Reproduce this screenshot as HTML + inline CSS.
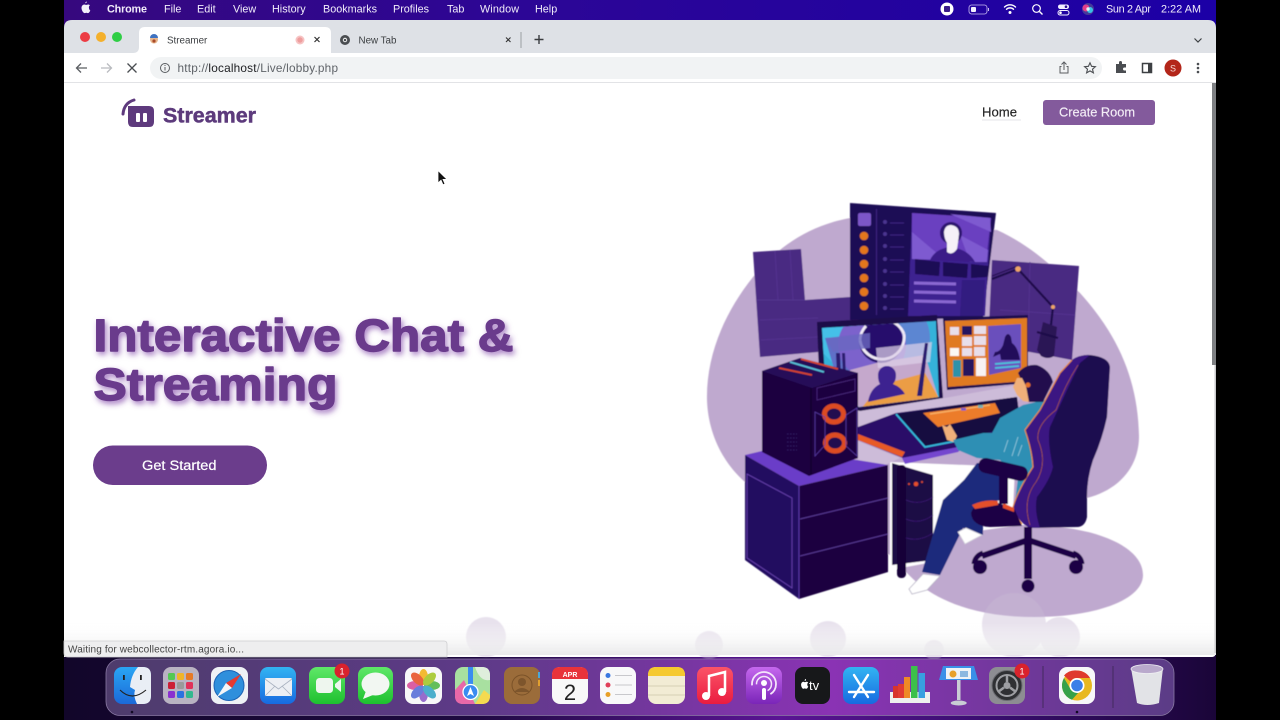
<!DOCTYPE html>
<html lang="en"><head><meta charset="utf-8"><title>Streamer</title>
<style>
html,body{margin:0;padding:0;width:1280px;height:720px;overflow:hidden;background:#000}
svg{display:block;position:absolute;left:0;top:0}
text{font-family:"Liberation Sans",sans-serif}
.m{font-size:10.8px;fill:#f1ecfa}
</style></head><body>
<svg width="1280" height="720" viewBox="0 0 1280 720" xmlns="http://www.w3.org/2000/svg">
<defs>
<linearGradient id="menu" x1="0" x2="1" y1="0" y2="0"><stop offset="0" stop-color="#36087e"/><stop offset=".4" stop-color="#2c0696"/><stop offset="1" stop-color="#1c00a6"/></linearGradient>
<linearGradient id="bot" x1="0" x2="1" y1="0" y2="0"><stop offset="0" stop-color="#12062a"/><stop offset=".35" stop-color="#1e0a40"/><stop offset=".62" stop-color="#5a1494"/><stop offset=".8" stop-color="#3a0e70"/><stop offset="1" stop-color="#1a0538"/></linearGradient>
<linearGradient id="dock" x1="0" x2="1" y1="0" y2="0"><stop offset="0" stop-color="#4e3c6c"/><stop offset=".35" stop-color="#5e3a88"/><stop offset=".68" stop-color="#8a33b4"/><stop offset="1" stop-color="#5b3c86"/></linearGradient>
<linearGradient id="fade" x1="0" x2="0" y1="0" y2="1"><stop offset="0" stop-color="#fff" stop-opacity="0"/><stop offset="1" stop-color="#e9e9ea"/></linearGradient>
<linearGradient id="face" x1="0" x2="0" y1="0" y2="1"><stop offset="0" stop-color="#2aa6f4"/><stop offset="1" stop-color="#1b69d8"/></linearGradient>
<linearGradient id="grn" x1="0" x2="0" y1="0" y2="1"><stop offset="0" stop-color="#5fe868"/><stop offset="1" stop-color="#1ec02f"/></linearGradient>
<linearGradient id="blue" x1="0" x2="0" y1="0" y2="1"><stop offset="0" stop-color="#32b4f2"/><stop offset="1" stop-color="#176ae0"/></linearGradient>
<linearGradient id="red" x1="0" x2="0" y1="0" y2="1"><stop offset="0" stop-color="#fb5468"/><stop offset="1" stop-color="#ea1c40"/></linearGradient>
<linearGradient id="pod" x1="0" x2="0" y1="0" y2="1"><stop offset="0" stop-color="#c568ee"/><stop offset="1" stop-color="#7a25b8"/></linearGradient>
<filter id="sh" x="-5%" y="-20%" width="110%" height="150%"><feDropShadow dx="2" dy="3" stdDeviation="2.8" flood-color="#7a3fa4" flood-opacity=".65"/></filter>
<filter id="soft" x="-5%" y="-5%" width="110%" height="110%"><feGaussianBlur stdDeviation=".4"/></filter>
</defs>

<!-- desktop, pillarboxed to 64..1216 -->
<rect width="1280" height="720" fill="#000"/>
<rect x="64" y="640" width="1152" height="80" fill="url(#bot)"/>
<rect x="64" width="1152" height="30" fill="url(#menu)"/>

<!-- menu bar -->
<path d="M85.300 3.300c.9-.1 1.600-.8 1.500-1.800-.9.100-1.600.9-1.500 1.800zM88.900 7.200c0-1.200 1-1.700 1-1.800-.6-.8-1.400-.9-1.800-.9-.7 0-1.400.4-1.900.4s-1-.4-1.700-.4c-1.800 0-3 1.500-3 3.400 0 2.600 1.900 5.200 3.100 5.200.6 0 1-.4 1.700-.4s1.100.4 1.700.4c1 0 1.900-1.500 2.300-2.700-1.200-.5-1.400-2.700-1.400-3.200z" fill="#f4f0fa"/>
<text x="107" y="12.500" class="m" style="font-weight:700" textLength="40">Chrome</text>
<text x="164" y="12.500" class="m">File</text><text x="197" y="12.500" class="m">Edit</text><text x="233" y="12.500" class="m">View</text><text x="272" y="12.500" class="m">History</text><text x="323" y="12.500" class="m" textLength="54">Bookmarks</text><text x="393" y="12.500" class="m">Profiles</text><text x="447" y="12.500" class="m">Tab</text><text x="480" y="12.500" class="m" textLength="39">Window</text><text x="535" y="12.500" class="m">Help</text>
<circle cx="947" cy="9" r="6.500" fill="#fff"/><rect x="944" y="6" width="6" height="6" rx="1" fill="#3a1a8a"/>
<rect x="969" y="5" width="18" height="9" rx="2.500" fill="none" stroke="#c9bdf0" stroke-width=".8"/><rect x="971" y="7" width="5" height="5" rx="1" fill="#f3f0ff"/><rect x="988" y="8" width="1" height="3" fill="#c9bdf0"/>
<g fill="none" stroke="#fff" stroke-width="1.400" stroke-linecap="round"><path d="M1004.500 7a8 8 0 0 1 11 0M1006.500 9.300a5 5 0 0 1 7 0"/></g><circle cx="1010" cy="12.500" r="1.500" fill="#fff"/>
<circle cx="1036.500" cy="8.500" r="3.800" fill="none" stroke="#fff" stroke-width="1.200"/><path d="M1039.500 11.500l3 3" stroke="#fff" stroke-width="1.400"/>
<rect x="1058" y="4.500" width="11" height="4.500" rx="2.200" fill="#f3f0ff"/><rect x="1058" y="10.500" width="11" height="4.500" rx="2.200" fill="none" stroke="#f3f0ff"/><circle cx="1066" cy="6.700" r="1.300" fill="#2a0a90"/><circle cx="1060.500" cy="12.700" r="1.300" fill="#fff"/>
<circle cx="1088" cy="9" r="6" fill="#453a9a"/><circle cx="1086" cy="8" r="3.500" fill="#e23d8b"/><circle cx="1090" cy="10" r="3" fill="#39c1e6"/><circle cx="1088" cy="9" r="1.700" fill="#fff" opacity=".8"/>
<text x="1106" y="12.500" class="m" textLength="45">Sun 2 Apr</text><text x="1161" y="12.500" class="m" textLength="40">2:22 AM</text>

<!-- window -->
<path d="M64 657V28q0-8 8-8h1136q8 0 8 8v624q0 5-5 5z" fill="#dee1e6"/>
<rect x="64" y="53" width="1152" height="30" fill="#fff"/>
<rect x="64" y="82" width="1152" height="1" fill="#e2e3e6"/>
<path d="M64 83H1216V652q0 5-5 5H64z" fill="#fff"/>
<circle cx="85" cy="37" r="5" fill="#ec3c44"/><circle cx="101" cy="37" r="5" fill="#f4b02c"/><circle cx="117" cy="37" r="5" fill="#2fce45"/>
<path d="M133 53q6 0 6-6V33q0-6 6-6H325q6 0 6 6V53z" fill="#fff"/>
<circle cx="154" cy="39.500" r="4" fill="#e8b68c"/><path d="M150 38a4 4 0 0 1 8 0z" fill="#3f72c0"/><circle cx="154" cy="41" r="1.600" fill="#a84a2a"/>
<text x="167" y="43.500" font-size="9.800" fill="#3d4043">Streamer</text>
<circle cx="300" cy="40" r="4.500" fill="#f6c3c3"/><circle cx="300" cy="40" r="2.700" fill="#ee9d9d"/>
<path d="M314.500 37l5 5M319.500 37l-5 5" stroke="#333" stroke-width="1.200"/>
<circle cx="345" cy="40" r="5" fill="#4a4d51"/><circle cx="345" cy="40" r="2.200" fill="#fff"/><circle cx="345" cy="40" r="1.300" fill="#4a4d51"/>
<text x="358.500" y="43.500" font-size="9.800" fill="#3d4043">New Tab</text>
<path d="M506 37.500l4.500 4.500M510.500 37.500l-4.500 4.500" stroke="#333" stroke-width="1.100"/>
<rect x="520.500" y="32" width="1" height="16" fill="#9b9ea3"/>
<path d="M539 35v9M534.500 39.500h9" stroke="#3a3c40" stroke-width="1.400"/>
<path d="M1194.500 38.500l3.500 3.500 3.500-3.500" fill="none" stroke="#3d4043" stroke-width="1.200"/>

<!-- toolbar -->
<path d="M87 68H76.500M81 63.500L76.500 68l4.500 4.500" fill="none" stroke="#5b5e62" stroke-width="1.300"/>
<path d="M101 68h10.500M107 63.500l4.500 4.500-4.500 4.500" fill="none" stroke="#b9bbbf" stroke-width="1.300"/>
<path d="M127.500 63.500l9 9M136.500 63.500l-9 9" stroke="#4a4d51" stroke-width="1.300"/>
<rect x="150" y="57" width="952" height="22" rx="11" fill="#f1f3f4"/>
<circle cx="165" cy="68" r="4.500" fill="none" stroke="#5a5d61" stroke-width="1"/><rect x="164.500" y="67" width="1" height="3.500" fill="#5a5d61"/><rect x="164.500" y="65" width="1" height="1" fill="#5a5d61"/>
<text x="177.500" y="72" font-size="11.800" fill="#5f6368" textLength="160.500">http://<tspan fill="#202124">localhost</tspan>/Live/lobby.php</text>
<path d="M1064 62.500v7.500M1061.500 64.500l2.500-2.500 2.500 2.500M1061.500 66.500h-1.500v6.500h8v-6.500h-1.500" fill="none" stroke="#5a5d61" stroke-width="1"/>
<path d="M1090 62.800l1.600 3.500 3.800.4-2.900 2.500.9 3.700-3.400-2-3.400 2 .9-3.700-2.900-2.500 3.800-.4z" fill="none" stroke="#4a4d51" stroke-width="1.100"/>
<path d="M1116 65h3v-1.500a1.500 1.500 0 0 1 3 0V65h4v3.500h-1.500a1.500 1.500 0 0 0 0 3h1.500V74h-10z" transform="translate(0 -1)" fill="#4a4d51"/>
<rect x="1142.500" y="63.500" width="9" height="9" fill="#fff" stroke="#3d4043" stroke-width="1.500"/><rect x="1148" y="63.500" width="4" height="9" fill="#3d4043"/>
<circle cx="1173" cy="68" r="8.500" fill="#b3261a"/><text x="1173" y="71.500" font-size="9" fill="#f6dcd8" text-anchor="middle">S</text>
<circle cx="1198" cy="64" r="1.300" fill="#4a4d51"/><circle cx="1198" cy="68" r="1.300" fill="#4a4d51"/><circle cx="1198" cy="72" r="1.300" fill="#4a4d51"/>

<!-- page: illustration -->
<g filter="url(#soft)">
<path d="M850 218C806 226 775 250 753 277C725 312 706 355 707 400C708 432 722 462 745 482L900 560L1000 520L1087 498C1118 490 1139 468 1139 436C1138 380 1118 335 1080 293C1055 268 1030 245 997 230Z" fill="#bfa9cf"/>
<path d="M880 545L1020 525C1090 524 1143 545 1143 575C1143 600 1095 617 1035 617C980 617 935 603 907 573Z" fill="#bfa9cf"/>
<path d="M890 462L1015 467L1013 510L1000 525L960 520L933 562L890 570Z" fill="#fff"/>

<!-- panels -->
<path d="M753 252L801 249L805 300L850 297L850 322L818 345L818 352L760 357Z" fill="#4a2a82"/>
<path d="M757 300L805 300M760 320L818 318M761 340L818 337M775 251L778 300M790 250L793 300" stroke="#553490" stroke-width="1"/>
<path d="M992 260L1079 266L1072 360L1030 352L988 347Z" fill="#4a2a82"/>
<path d="M1030 262L1028 350M1000 310L1075 315" stroke="#553490" stroke-width="1"/>

<!-- top monitor -->
<path d="M850 203L996 213L983 318L850 320Z" fill="#1f0a55"/>
<rect x="858" y="213" width="13" height="13" rx="2" fill="#7b56c8"/>
<g fill="#e3761f"><circle cx="864" cy="236" r="4.300"/><circle cx="864" cy="250" r="4.300"/><circle cx="864" cy="264" r="4.300"/><circle cx="864" cy="278" r="4.300"/><circle cx="864" cy="292" r="4.300"/><circle cx="864" cy="306" r="4.300"/></g>
<rect x="876" y="209" width="1" height="106" fill="#3c2480"/>
<g fill="#4b3490"><circle cx="885" cy="222" r="2"/><circle cx="885" cy="234" r="2"/><circle cx="885" cy="246" r="2"/><circle cx="885" cy="259" r="2"/><circle cx="885" cy="271" r="2"/><circle cx="885" cy="284" r="2"/><circle cx="885" cy="296" r="2"/><circle cx="885" cy="308" r="2"/></g>
<path d="M890 223h14M890 235h14M890 247h14M890 260h14M890 272h14M890 285h14M890 297h14M890 309h14" stroke="#3b2680" stroke-width="1"/>
<path d="M912 213L991 218L985 316L908 316Z" fill="#3e2090"/>
<path d="M912 213L991 218L986 262L912 259Z" fill="#6a3fc0"/>
<path d="M912 232L945 260L912 259ZM950 214L991 232L990 218ZM960 235L988 250L987 262L970 262Z" fill="#7e5ad0"/>
<path d="M930 260Q935 249 950 247Q968 249 975 262Z" fill="#3b1f88"/>
<circle cx="951" cy="233" r="11" fill="#2d1670"/>
<path d="M944 232Q945 225 951 225Q959 226 959 234Q958 243 957 249Q952 256 947 252L947 243Q944 238 944 232Z" fill="#f5f1f8"/>
<path d="M915 259L940 262L939 276L915 274Z M943 262L968 264L967 278L943 276Z M971 264L989 266L987 277L971 278Z" fill="#1f0a55"/>
<path d="M914 283L956 284M914 292L956 293M914 301L956 302" stroke="#8a68d2" stroke-width="3"/>
<path d="M962 280L985 280L983 316L960 316Z" fill="#331a80"/>

<!-- mic -->
<path d="M992 279L1018 269L1053 307L1051 325" fill="none" stroke="#1c0a48" stroke-width="2.200"/>
<path d="M992 276L1018 266" stroke="#1c0a48" stroke-width="1"/>
<circle cx="1018" cy="269" r="2.800" fill="#f0a668"/><circle cx="1053" cy="307" r="2" fill="#f0a668"/>
<path d="M1043 322L1057 327L1054 356Q1048 360 1041 356L1037 350Z" fill="#2b1255"/>
<path d="M1037 332L1058 338" stroke="#1c0a48" stroke-width="2"/>

<!-- lavender desk gap -->
<path d="M858 408L945 398L1017 385L1020 400L897 414L858 428Z" fill="#cdbcd9"/>

<!-- left monitor -->
<path d="M817 322L937 315L943 398L860 411L820 400Z" fill="#1b0848"/>
<clipPath id="lm"><path d="M822 328L936 321L939 397L859 407L826 395Z"/></clipPath>
<g clip-path="url(#lm)">
<rect x="815" y="315" width="130" height="100" fill="#35b2da"/>
<path d="M815 315H860L858 345L840 370L815 345Z" fill="#44c0e8"/>
<path d="M825 338L875 335L872 372L835 372Z" fill="#6070c8"/>
<circle cx="872" cy="345" r="34" fill="#7b62cc"/>
<circle cx="890" cy="338" r="40" fill="#7b62cc" opacity=".55"/>
<path d="M850 370L880 362L925 355L938 397L859 410Z" fill="#c5a8cc"/>
<path d="M880 385L925 373L940 400L860 410Z" fill="#eb9d45"/>
<circle cx="881" cy="341" r="22" fill="#28106c"/>
<path d="M860 340A22 22 0 0 0 904 334M904 334A22 22 0 0 0 893 322M866 326A22 22 0 0 0 860 340" fill="none" stroke="#f0eaf6" stroke-width="2.800"/>
<path d="M876 348L932 342L930 362L878 368Z" fill="#dcd0e8" opacity=".72"/>
<path d="M826 338L870 333L870 348L833 352Z" fill="#6a68c0" opacity=".8"/>
<path d="M878 375a9 9 0 0 1 18 0q0 6-3 9q8 3 12 10L868 402q2-13 12-18q-2-3-2-9z" fill="#3e2390"/>
<path d="M925 343L928 343L922 396L917 396Z" fill="#2c1a70"/>
<path d="M836 353L840 353L841 376L837 376ZM842 353L845 353L846 376L843 376Z" fill="#2c1a70"/>
</g>

<!-- right monitor -->
<path d="M943 318L1028 315L1028 383L947 390Z" fill="#1c0a4e"/>
<path d="M945 321L1027 318L1027 381L948 387Z" fill="#e07a20"/>
<path d="M950 327h9v8h-9zM974 326h12v8h-12zM962 337h10v9h-10zM974 336h12v9h-12zM962 348h10v8h-10zM974 347h11v9h-11z" fill="#e8deea"/>
<rect x="950" y="348" width="9" height="8" fill="#fbf8f4"/>
<rect x="962" y="326" width="10" height="9" fill="#28125e"/>
<rect x="963" y="359" width="11" height="17" fill="#28125e"/><rect x="976" y="358" width="10" height="18" fill="#f8f3f3"/><rect x="953" y="360" width="8" height="17" fill="#2f92a8"/>
<path d="M988 326L1021 324L1021 368L989 375Z" fill="#6b4fbc"/>
<path d="M995 352Q1000 352 1003 345L1005 337Q1008 331 1011 337L1012 343Q1018 347 1020 360H1001L1000 354L993 357Z" fill="#24105a"/>
<path d="M995 364l25-2M995 368l24-2" stroke="#4cc3dc" stroke-width="1.800"/>

<!-- desk -->
<path d="M858 427L896 413L1017 397L1020 420L1010 440L1000 445L903 458L858 440Z" fill="#2a1068"/>
<path d="M858 440L902 457L905 452L858 434Z" fill="#e85a25"/>
<path d="M902 458L958 447L965 446L958 452L905 464Z" fill="#7446cf"/>
<path d="M858 441L900 458L885 465L858 465Z" fill="#cdbcd9"/>
<path d="M896 414L1017 397L1020 425L925 447Z" fill="#140840"/>
<path d="M896 414L925 447L987 435" fill="none" stroke="#35b8dc" stroke-width="1.800"/>
<path d="M923 413L995 403L1000 413L938 427Z" fill="#ec7c2c"/>
<path d="M930 414L990 405" stroke="#f7b065" stroke-width="1.500"/>
<rect x="961" y="408" width="5" height="2.500" fill="#7a58c8"/><rect x="978" y="405" width="5" height="3" fill="#79b0b0"/>
<path d="M942 425L947 427L950 424L957 436L954 442L947 440Z" fill="#f0b07a"/>

<!-- cabinet -->
<path d="M745 455L762 451L857 460L888 465L799 486Z" fill="#6b3cc8"/>
<path d="M745 455L799 486L799 599L745 560Z" fill="#240a60"/>
<path d="M799 486L888 465L888 572L799 599Z" fill="#1a0540"/>
<path d="M747 474L792 498L792 588L747 558Z" fill="none" stroke="#6b45b4" stroke-width=".8"/>
<path d="M800 519L888 498M800 556L888 534" stroke="#5a3a98" stroke-width="1"/>
<path d="M799 486V599" stroke="#6a45c0" stroke-width=".8"/>

<!-- PC -->
<path d="M762 371L800 358L858 373L858 458L809 476L762 452Z" fill="#1a0540"/>
<path d="M762 371L800 358L858 373L812 388Z" fill="#260d58"/>
<path d="M779 368L812 375" stroke="#d8452a" stroke-width="1.800"/><path d="M790 362L824 372" stroke="#58c0d8" stroke-width="1.800"/><path d="M801 359L838 369" stroke="#d8452a" stroke-width="1.800"/>
<path d="M811 388V475" stroke="#120430" stroke-width="2"/>
<path d="M817 388L855 379V391L817 400Z" fill="none" stroke="#4c2a80" stroke-width=".8"/>
<ellipse cx="834" cy="414" rx="9.500" ry="8" fill="#241050" stroke="#dc4c22" stroke-width="5"/>
<ellipse cx="835" cy="443" rx="9.500" ry="8" fill="#241050" stroke="#dc4c22" stroke-width="5"/>
<path d="M815 412L825 417L825 445L815 456Z M857 408L846 415L846 446L857 456Z" fill="none" stroke="#5638a0" stroke-width=".8"/>
<path d="M787 434h10M787 438h10M787 442h10M787 446h10M787 450h10" stroke="#2e1a60" stroke-width="1.200" stroke-dasharray="1.500 1.500"/>

<!-- small tower -->
<path d="M892 463L933 475L933 560L892 565Z" fill="#1f0845"/>
<rect x="897" y="465" width="9" height="113" rx="4" fill="#180538"/>
<circle cx="916" cy="484" r="2.300" fill="#e4502a"/><circle cx="909" cy="484" r="1" fill="#e4502a"/><circle cx="922" cy="482" r="1" fill="#e4502a"/>
<path d="M906 500Q920 506 933 497M906 519Q920 525 933 515M906 538Q920 542 933 533" fill="none" stroke="#36186a" stroke-width="1"/>

<!-- person -->
<path d="M964 480L977 463L1000 463L1002 500L983 503L983 535L963 528L940 575L922 572L943 500Z" fill="#1e2a7c"/>
<path d="M958 532L966 528L982 535L965 544Z" fill="#fff" stroke="#d0cdd9" stroke-width=".8"/>
<path d="M923 574L940 576L927 590L912 594L909 589Z" fill="#fff" stroke="#b8b4c6" stroke-width=".8"/>
<path d="M953 440L983 433L992 433L1000 418L1023 405L1045 400L1036 440L1034 467L1024 513L1014 510L1018 478L1000 460L977 458L958 450Z" fill="#2d8fb4"/>
<path d="M1008 440L1004 452M1018 437L1012 456M1022 445L1018 456" stroke="#a9d8e8" stroke-width=".6"/>
<path d="M1018 373Q1025 364 1037 365Q1050 370 1053 382L1043 402L1028 402L1024 386Z" fill="#22104e"/>
<path d="M1017 378L1022 378L1026 386L1029 402L1023 401L1017 395L1013 387Z" fill="#f0b07a"/>
<circle cx="1028" cy="385" r="2.500" fill="#e4702a"/>

<!-- chair -->
<path d="M1060 373L1072 360Q1082 354 1090 355Q1109 357 1110 367L1107 417Q1102 440 1093 460Q1087 478 1087 497V517Q1085 527 1077 527L1030 528Q1018 522 1013 507Q1018 490 1033 467Q1032 450 1025 430L1040 410Z" fill="#1f0750"/>
<path d="M1060 373L1072 360Q1078 355 1090 355L1080 363L1067 390L1050 427Q1047 440 1053 467Q1050 480 1037 497Q1034 510 1040 528H1030Q1018 522 1013 507Q1018 490 1033 467Q1032 450 1025 430L1040 410Z" fill="#3a1282"/>
<path d="M1072 360L1060 373L1040 410L1025 430Q1032 450 1033 467Q1018 490 1013 507Q1016 517 1022 524" fill="none" stroke="#ec8a34" stroke-width="1.100"/>
<path d="M1078 365Q1065 385 1056 410Q1036 425 1038 440Q1048 463 1036 482Q1022 500 1030 525" fill="none" stroke="#b9602e" stroke-width=".6"/>
<path d="M971 513Q975 500 998 503L1014 508L1022 526L990 527Q972 526 971 513Z" fill="#1c0644"/>
<path d="M972 505Q985 499 998 501L998 505L975 509ZM1003 503L1014 508L1014 512L1003 508Z" fill="#e4502a"/>
<rect x="978" y="462" width="50" height="15" rx="7" transform="rotate(13 1003 470)" fill="#1c0644"/>
<rect x="999" y="476" width="9" height="28" fill="#1c0644"/>
<rect x="1024" y="527" width="8" height="52" fill="#1c0644"/>
<path d="M1028 540L982 556M1028 540L1076 556" stroke="#1c0644" stroke-width="6"/>
<path d="M983 553Q975 556 974 564" fill="none" stroke="#1c0644" stroke-width="5"/>
<path d="M1073 553Q1081 556 1082 564" fill="none" stroke="#1c0644" stroke-width="5"/>
<circle cx="980" cy="567" r="7" fill="#1c0644"/><circle cx="1076" cy="567" r="7" fill="#1c0644"/><circle cx="1028" cy="586" r="6.500" fill="#1c0644"/>

<!-- bubbles -->
<g fill="#c8b9d4" opacity=".42">
<circle cx="486" cy="637" r="20"/><circle cx="709" cy="645" r="14"/><circle cx="828" cy="639" r="18"/><circle cx="934" cy="650" r="10"/><circle cx="1014" cy="625" r="32"/><circle cx="1060" cy="637" r="20"/>
</g>
</g>
<rect x="64" y="622" width="1152" height="33" fill="url(#fade)"/>
<rect x="1212" y="83" width="4" height="282" fill="#7e8083"/>
<rect x="1214.500" y="365" width="1.500" height="288" fill="#c9c9cb"/>

<!-- nav -->
<path d="M128 106H149Q154 106 154 111V122Q154 127 149 127H133Q128 127 128 122Z" fill="#5e3a7d"/>
<rect x="136" y="113" width="4" height="9" rx="1" fill="#fff"/><rect x="143" y="113" width="4" height="9" rx="1" fill="#fff"/>
<path d="M123 114Q124 103 134 100" fill="none" stroke="#5e3a7d" stroke-width="3" stroke-linecap="round"/>
<text x="163" y="122.500" font-size="21" font-weight="700" fill="#5c3a7c" stroke="#5c3a7c" stroke-width=".5" textLength="93" lengthAdjust="spacingAndGlyphs">Streamer</text>
<text x="982" y="116.500" font-size="12.800" fill="#222" stroke="#222" stroke-width=".15" textLength="35" lengthAdjust="spacingAndGlyphs">Home</text>
<rect x="982" y="119.500" width="39" height="1" fill="#e6e6e8"/>
<rect x="1043" y="100" width="112" height="25" rx="3" fill="#835a9c"/>
<text x="1059" y="116.500" font-size="12.800" fill="#f3edf6" stroke="#f3edf6" stroke-width=".15" textLength="76" lengthAdjust="spacingAndGlyphs">Create Room</text>

<!-- hero -->
<g filter="url(#sh)" fill="#6a3b8c" stroke="#6a3b8c" stroke-width="1.400" stroke-linejoin="round">
<text x="93.500" y="351" font-size="45" font-weight="700" textLength="420" lengthAdjust="spacingAndGlyphs">Interactive Chat &amp;</text>
<text x="93.500" y="400" font-size="45" font-weight="700" textLength="244" lengthAdjust="spacingAndGlyphs">Streaming</text>
</g>
<rect x="93" y="445.500" width="174" height="39.500" rx="19.700" fill="#6b3d8c"/>
<text x="142" y="470" font-size="13.500" fill="#fff" stroke="#fff" stroke-width=".2" textLength="74.500" lengthAdjust="spacingAndGlyphs">Get Started</text>

<!-- cursor -->
<path d="M438 170.500V183l3-2.800 2 4.600 2-.9-2-4.500h4z" fill="#111" stroke="#fff" stroke-width=".8"/>

<!-- status -->
<path d="M64 641H444q3 0 3 3V657H68q-4 0-4-4z" fill="#eeeeef" stroke="#cfcfd1" stroke-width=".8"/>
<text x="68" y="652.700" font-size="10" fill="#444" textLength="176">Waiting for webcollector-rtm.agora.io...</text>

<!-- dock -->
<rect x="106" y="659" width="1068" height="56.500" rx="14" fill="url(#dock)" stroke="#8a7aa4" stroke-width=".8"/>
<rect x="1042.500" y="666" width="1" height="42" fill="#43295f"/><rect x="1112.500" y="666" width="1" height="42" fill="#43295f"/>
<circle cx="132" cy="712" r="1.300" fill="#120a24"/><circle cx="1077" cy="712" r="1.300" fill="#120a24"/>

<!-- finder -->
<rect x="114" y="667" width="37" height="37" rx="8" fill="url(#face)"/>
<path d="M138 667H143Q151 667 151 675V696Q151 704 143 704H137Q133 696 135 690L130 687Q131 675 138 667Z" fill="#e9eef5"/>
<path d="M120 690Q132 702 146 690" fill="none" stroke="#222" stroke-width="1.100"/><rect x="123" y="675" width="1.800" height="5" fill="#222"/><rect x="140" y="675" width="1.800" height="5" fill="#222"/>
<!-- launchpad -->
<rect x="163" y="667" width="36" height="37" rx="8" fill="#b9b3c2"/>
<g><rect x="168" y="673" width="7" height="7" rx="1.500" fill="#53c853"/><rect x="177" y="673" width="7" height="7" rx="1.500" fill="#f0b42a"/><rect x="186" y="673" width="7" height="7" rx="1.500" fill="#e67a26"/><rect x="168" y="682" width="7" height="7" rx="1.500" fill="#cc1f35"/><rect x="177" y="682" width="7" height="7" rx="1.500" fill="#9a9a9a"/><rect x="186" y="682" width="7" height="7" rx="1.500" fill="#e0325a"/><rect x="168" y="691" width="7" height="7" rx="1.500" fill="#8a2fd0"/><rect x="177" y="691" width="7" height="7" rx="1.500" fill="#2c72e0"/><rect x="186" y="691" width="7" height="7" rx="1.500" fill="#33b88e"/></g>
<!-- safari -->
<rect x="211" y="667" width="37" height="37" rx="8" fill="#eef1f5"/><circle cx="229" cy="685.500" r="15" fill="#2f8fdc" stroke="#1b62b4"/><path d="M241 674L226 683L232 688Z" fill="#e63a30"/><path d="M217 697L226 683L232 688Z" fill="#f4f6f8"/>
<!-- mail -->
<rect x="260" y="667" width="36" height="37" rx="8" fill="url(#blue)"/><rect x="265" y="678" width="27" height="18" rx="1.500" fill="#eceff4"/><path d="M265 679L278.500 689L292 679M265 696L275 686M292 696L282 686" fill="none" stroke="#a9b2c0" stroke-width=".8"/>
<!-- facetime -->
<rect x="309" y="667" width="36" height="37" rx="8" fill="url(#grn)"/><rect x="316" y="678" width="17" height="15" rx="3.500" fill="#eef6ee"/><path d="M335 684L341 679V692L335 687Z" fill="#eef6ee"/>
<circle cx="342" cy="671" r="7.500" fill="#d9222c"/><text x="342" y="674.500" font-size="9" fill="#fff" text-anchor="middle">1</text>
<!-- messages -->
<rect x="358" y="667" width="35" height="37" rx="8" fill="url(#grn)"/><ellipse cx="375.500" cy="684" rx="14" ry="11.500" fill="#f2f7f2"/><path d="M366 691L363 699L373 695Z" fill="#f2f7f2"/>
<!-- photos -->
<rect x="405" y="667" width="37" height="37" rx="8" fill="#f7f7f8"/>
<g opacity=".9"><ellipse cx="423.500" cy="677" rx="4.500" ry="8" fill="#f4b41e"/><ellipse cx="423.500" cy="694" rx="4.500" ry="8" fill="#8d5fc8"/><ellipse cx="415" cy="685.500" rx="8" ry="4.500" fill="#d94f9a"/><ellipse cx="432" cy="685.500" rx="8" ry="4.500" fill="#55b84a"/><ellipse cx="417.500" cy="679" rx="4.500" ry="8" transform="rotate(-45 417.500 679)" fill="#e8552c"/><ellipse cx="429.500" cy="679" rx="4.500" ry="8" transform="rotate(45 429.500 679)" fill="#a4c82c"/><ellipse cx="417.500" cy="692" rx="4.500" ry="8" transform="rotate(45 417.500 692)" fill="#5a72d8"/><ellipse cx="429.500" cy="692" rx="4.500" ry="8" transform="rotate(-45 429.500 692)" fill="#3aa8c8"/></g>
<!-- maps -->
<rect x="455" y="667" width="35" height="37" rx="8" fill="#a8e0a0"/><path d="M455 690L464 680L475 704H463Q455 704 455 696Z" fill="#e868a8"/><path d="M475 704L484 690L490 695V696Q490 704 482 704Z" fill="#f4da50"/><rect x="468" y="667" width="5" height="26" fill="#3a8cf0"/><path d="M475 667H482Q490 667 490 675V680Q480 682 475 667Z" fill="#dfeedc"/><circle cx="470.500" cy="692" r="7.500" fill="#3a8cf0" stroke="#fff" stroke-width="1.300"/><path d="M470.500 687L474 696L470.500 694L467 696Z" fill="#fff"/>
<!-- contacts -->
<rect x="504" y="667" width="36" height="37" rx="8" fill="#9b6c3a"/><circle cx="522" cy="685" r="10" fill="none" stroke="#7a5228"/><circle cx="522" cy="682" r="4" fill="#7d552c"/><path d="M514 692Q522 684 530 692" fill="#7d552c"/><rect x="538" y="672" width="2" height="6" fill="#4aa8d8"/><rect x="538" y="680" width="2" height="6" fill="#e0a030"/>
<!-- calendar -->
<rect x="552" y="667" width="36" height="37" rx="8" fill="#f8f8f8"/><path d="M552 679V675q0-8 8-8h20q8 0 8 8v4z" fill="#e8333a"/><text x="570" y="677" font-size="7" font-weight="700" fill="#fff" text-anchor="middle">APR</text><text x="570" y="700" font-size="22" fill="#222" text-anchor="middle">2</text>
<!-- reminders -->
<rect x="600" y="667" width="36" height="37" rx="8" fill="#f8f8f9"/><circle cx="608" cy="675.500" r="2.500" fill="#3a78e0"/><circle cx="608" cy="685" r="2.500" fill="#e0405a"/><circle cx="608" cy="694.500" r="2.500" fill="#e8a028"/><path d="M615 675.500h17M615 685h17M615 694.500h17" stroke="#c8c8cc"/>
<!-- notes -->
<rect x="648" y="667" width="37" height="37" rx="8" fill="#f2ecd4"/><path d="M648 676V675q0-8 8-8h21q8 0 8 8v1z" fill="#f5c92e"/><path d="M648 686h37M648 695h37" stroke="#d6cfb4"/>
<!-- music -->
<rect x="697" y="667" width="36" height="37" rx="8" fill="url(#red)"/><path d="M709 696V676L725 672V692" fill="none" stroke="#fff" stroke-width="2.500"/><circle cx="706" cy="696" r="4" fill="#fff"/><circle cx="722" cy="692" r="4" fill="#fff"/>
<!-- podcasts -->
<rect x="746" y="667" width="36" height="37" rx="8" fill="url(#pod)"/><circle cx="764" cy="684" r="12" fill="none" stroke="#f4e4fa" stroke-width="1.800" stroke-dasharray="52 24" stroke-dashoffset="-36"/><circle cx="764" cy="684" r="7.500" fill="none" stroke="#f4e4fa" stroke-width="1.500" stroke-dasharray="32 15" stroke-dashoffset="-23"/><circle cx="764" cy="683" r="3" fill="#fff"/><rect x="762" y="688" width="4" height="12" rx="2" fill="#fff"/>
<!-- tv -->
<rect x="795" y="667" width="35" height="37" rx="8" fill="#17181a"/><path d="M806 680.500c-.5.100-1.100.5-1.400.1-.1-.8.800-1.600 1.400-1.700.1.700-.1 1.200 0 1.600zM808 687c-.4 1-1 1.800-1.700 1.800-.6 0-.8-.4-1.500-.4s-.9.400-1.500.4c-1.100-.1-2.200-2.300-2.200-4 0-1.900 1.200-3 2.300-3 .6 0 1.100.4 1.500.4s1-.5 1.700-.4c.6 0 1.200.3 1.600.8-1.400.9-1.100 3.200.3 4.400z" fill="#fff"/><text x="809" y="690" font-size="13" fill="#fff">tv</text>
<!-- app store -->
<rect x="843" y="667" width="36" height="37" rx="8" fill="url(#blue)"/><path d="M854 675L868 697M868 675L854 697M849 692H874" stroke="#fff" stroke-width="2.400" stroke-linecap="round"/>
<!-- numbers -->
<rect x="890" y="692" width="40" height="11" fill="#eef0ee"/><rect x="893" y="686" width="7" height="12" fill="#d8342c"/><rect x="898" y="684" width="6" height="14" fill="#e03c34"/><rect x="904" y="677" width="6" height="21" fill="#ee8a26"/><rect x="911" y="666" width="6.500" height="32" fill="#3cc04a"/><rect x="918.500" y="673" width="6.500" height="25" fill="#38a0e0"/>
<!-- keynote -->
<path d="M943 666H974L978 680H939Z" fill="#3a90e8"/><rect x="946" y="668" width="25" height="11" fill="#eef2f6"/><circle cx="953" cy="674" r="3.500" fill="#e8a02a"/><rect x="960" y="671" width="8" height="6" fill="#8cb8e0"/><rect x="957" y="680" width="3.500" height="20" fill="#c9cdd4"/><ellipse cx="958.700" cy="703" rx="8" ry="2.500" fill="#c9cdd4"/>
<!-- settings -->
<rect x="989" y="667" width="36" height="37" rx="8" fill="#8d8d92"/><circle cx="1007" cy="685.500" r="15" fill="#2f3033" stroke="#6a6b70"/><circle cx="1007" cy="685.500" r="10.500" fill="none" stroke="#9d9ea2" stroke-width="2"/><circle cx="1007" cy="685.500" r="3.500" fill="#9d9ea2"/><path d="M1007 682V675M1004 687.500L998 692M1010 687.500L1016 692" stroke="#9d9ea2" stroke-width="2.500"/>
<circle cx="1022" cy="671" r="7.500" fill="#d9222c"/><text x="1022" y="674.500" font-size="9" fill="#fff" text-anchor="middle">1</text>
<!-- chrome -->
<rect x="1059" y="667" width="36" height="37" rx="8" fill="#f7f7f8"/>
<circle cx="1077" cy="685.500" r="15" fill="#e8b820"/>
<path d="M1077 670.500A15 15 0 0 1 1090 678H1077A7.500 7.500 0 0 0 1070.500 681.500L1064 675.500A15 15 0 0 1 1077 670.500Z" fill="#df3a2e"/>
<path d="M1064 678A15 15 0 0 0 1072 699.700L1078.500 692.500A7.500 7.500 0 0 1 1070.500 689Z" fill="#37a14a"/>
<circle cx="1077" cy="685.500" r="7.500" fill="#fff"/><circle cx="1077" cy="685.500" r="5.800" fill="#3b7fe8"/>
<!-- trash -->
<path d="M1131 668L1163 668L1159 703Q1147 707 1137 703Z" fill="#e2e3e7"/><ellipse cx="1147" cy="669" rx="16" ry="4.500" fill="#b9a9cc" stroke="#eeeef2" stroke-width=".8"/>
</svg>
</body></html>
